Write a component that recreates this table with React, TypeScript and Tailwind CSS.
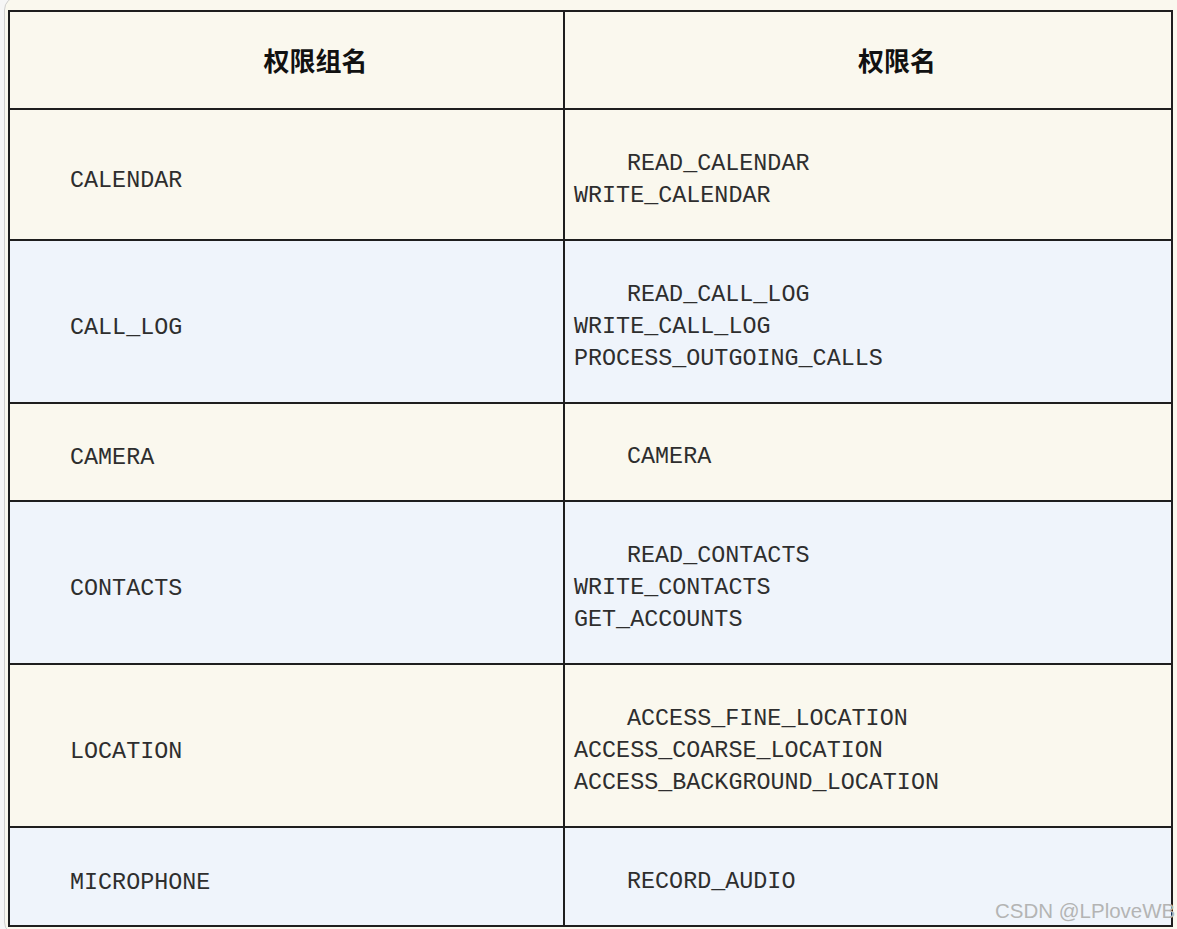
import React from "react";

type Row = { group: string; perms: string[]; bg: string; h: string };

const rows: Row[] = [
  { group: "CALENDAR", perms: ["READ_CALENDAR", "WRITE_CALENDAR"], bg: "bg-[#faf8ee]", h: "h-[131px]" },
  { group: "CALL_LOG", perms: ["READ_CALL_LOG", "WRITE_CALL_LOG", "PROCESS_OUTGOING_CALLS"], bg: "bg-[#eff4fb]", h: "h-[163px]" },
  { group: "CAMERA", perms: ["CAMERA"], bg: "bg-[#faf8ee]", h: "h-[98px]" },
  { group: "CONTACTS", perms: ["READ_CONTACTS", "WRITE_CONTACTS", "GET_ACCOUNTS"], bg: "bg-[#eff4fb]", h: "h-[163px]" },
  { group: "LOCATION", perms: ["ACCESS_FINE_LOCATION", "ACCESS_COARSE_LOCATION", "ACCESS_BACKGROUND_LOCATION"], bg: "bg-[#faf8ee]", h: "h-[163px]" },
  { group: "MICROPHONE", perms: ["RECORD_AUDIO"], bg: "bg-[#eff4fb]", h: "h-[97px]" },
];

const mono = { fontFamily: '"Liberation Mono", "Courier New", monospace' } as React.CSSProperties;

export default function App() {
  return (
    <div className="relative w-[1177px] h-[929px] overflow-hidden bg-[#f6f6f6]">
      <div className="ml-[4px] mt-[-4px] w-[1180px] h-[940px] rounded-[14px] border border-[#cfcfcf] bg-[#faf8ee] pl-[3px] pt-[13px]">
        <div className="w-[1165px] border-2 border-[#1e1e1e] text-[#2e2e2e]">
          {/* header */}
          <div className="flex h-[98px] border-b-2 border-[#1e1e1e] bg-[#faf8ee]">
            <div className="w-[555px] border-r-2 border-[#1e1e1e] flex items-center justify-center pl-[58px] pb-[2px]">
              <span
                className="text-[26px] font-bold text-[#111]"
                style={{ fontFamily: '"Noto Sans CJK SC", sans-serif' }}
              >
                权限组名
              </span>
            </div>
            <div className="flex-1 flex items-center justify-center pl-[58px] pb-[2px]">
              <span
                className="text-[26px] font-bold text-[#111]"
                style={{ fontFamily: '"Noto Sans CJK SC", sans-serif' }}
              >
                权限名
              </span>
            </div>
          </div>
          {rows.map((r, i) => (
            <div
              key={r.group}
              className={`flex ${r.h} ${r.bg} ${i < rows.length - 1 ? "border-b-2 border-[#1e1e1e]" : ""}`}
            >
              <div className="w-[555px] border-r-2 border-[#1e1e1e] flex items-center pl-[60px] pt-[13px]">
                <span className="text-[23.4px] leading-[32.5px]" style={mono}>
                  {r.group}
                </span>
              </div>
              <div className="flex-1 flex flex-col justify-center pl-[9px] pt-[11px]">
                {r.perms.map((p, j) => (
                  <div
                    key={p}
                    className={`text-[23.4px] leading-[32.3px] whitespace-pre ${j === 0 ? "pl-[53px]" : ""}`}
                    style={mono}
                  >
                    {p}
                  </div>
                ))}
              </div>
            </div>
          ))}
        </div>
      </div>
      <div
        className="absolute left-[995px] top-[896px] text-[20.5px] text-[#b4b4b4] whitespace-nowrap"
        style={{ fontFamily: '"Liberation Sans", Arial, sans-serif' }}
      >
        CSDN @LPloveWB
      </div>
    </div>
  );
}
